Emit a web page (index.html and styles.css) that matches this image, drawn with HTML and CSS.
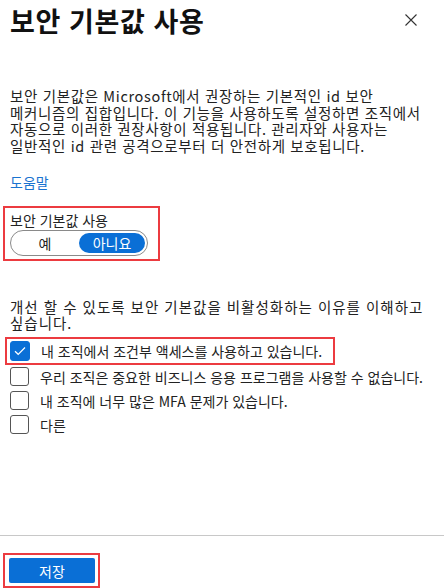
FILE: index.html
```html
<!DOCTYPE html>
<html lang="ko">
<head>
<meta charset="utf-8">
<link rel="stylesheet" href="styles.css">
</head>
<body>
<div class="panel">
  <main class="content">
    <header class="head">
      <h1 class="title">보안 기본값 사용</h1>
      <button class="close" aria-label="닫기">
        <svg width="14" height="14" viewBox="0 0 14 14"><path d="M1.5 1.5 L12.5 12.5 M12.5 1.5 L1.5 12.5" stroke="#333" stroke-width="1.1" fill="none"/></svg>
      </button>
    </header>
    <p class="desc">보안 기본값은 Microsoft에서 권장하는 기본적인 id 보안 메커니즘의 집합입니다. 이 기능을 사용하도록 설정하면 조직에서 자동으로 이러한 권장사항이 적용됩니다. 관리자와 사용자는 일반적인 id 관련 공격으로부터 더 안전하게 보호됩니다.</p>
    <a class="help" href="#">도움말</a>
    <div class="mark field">
      <div class="label">보안 기본값 사용</div>
      <div class="toggle">
        <span class="opt">예</span>
        <span class="opt on">아니요</span>
      </div>
    </div>
    <p class="reason">개선 할 수 있도록 보안 기본값을 비활성화하는 이유를 이해하고 싶습니다.</p>
    <ul class="checks">
      <li class="mark check-mark"><span class="box checked"><svg width="12" height="10" viewBox="0 0 12 10"><path d="M1 5.2 L4.2 8.3 L11 1.5" stroke="#fff" stroke-width="1.2" fill="none"/></svg></span><span>내 조직에서 조건부 액세스를 사용하고 있습니다.</span></li>
      <li><span class="box"></span><span>우리 조직은 중요한 비즈니스 응용 프로그램을 사용할 수 없습니다.</span></li>
      <li><span class="box"></span><span>내 조직에 너무 많은 MFA 문제가 있습니다.</span></li>
      <li><span class="box"></span><span>다른</span></li>
    </ul>
  </main>
  <footer class="foot">
    <div class="mark save-mark"><button class="save">저장</button></div>
  </footer>
</div>
</body>
</html>
```
FILE: styles.css
```css
* { box-sizing: border-box; }
html, body { margin: 0; padding: 0; background: #fff; }
body {
  font-family: "Noto Sans CJK KR", "Noto Sans", sans-serif;
  color: #222;
  font-size: 14px;
  word-break: keep-all;
}
.panel {
  height: 588px;
  display: flex;
  flex-direction: column;
}
.content {
  flex: 1;
  padding: 0 14px 0 10px;
}
.head {
  display: flex;
  align-items: center;
  justify-content: space-between;
  height: 40px;
}
.title {
  margin: 0;
  font-size: 27px;
  font-weight: 700;
  color: #111;
  letter-spacing: 0.6px;
}
.close {
  border: 0;
  background: none;
  padding: 0;
  margin-right: 12px;
  width: 14px;
  height: 14px;
  display: flex;
}
.desc {
  margin: 48px 0 0;
  font-size: 14.5px;
  line-height: 16.7px;
  letter-spacing: 0.65px;
}
.help {
  display: block;
  margin-top: 17px;
  color: #1a73d0;
  text-decoration: none;
}
.mark {
  border: 2px solid #ec3b40;
}
.field {
  margin: 14px 0 0 -7px;
  width: 157px;
  padding: 2px 10px 3px 5px;
}
.label { line-height: 20px; }
.toggle {
  display: flex;
  align-items: center;
  justify-content: space-between;
  height: 26px;
  border: 1px solid #8a8a8a;
  border-radius: 13px;
  padding: 0 2px 0 0;
}
.opt {
  width: 68px;
  text-align: center;
}
.opt.on {
  background: #0a6fd6;
  color: #fff;
  border-radius: 10px;
  height: 20px;
  line-height: 20px;
  width: 66px;
}
.reason {
  margin: 38px 0 0;
  font-size: 14.5px;
  line-height: 16px;
  letter-spacing: 1px;
}
.checks {
  list-style: none;
  margin: 6px 0 0;
  padding: 0;
}
.checks li {
  display: flex;
  align-items: center;
  gap: 11px;
  height: 24px;
}
.check-mark {
  margin-left: -5px;
  width: 330px;
  height: 28px !important;
  padding-left: 3px;
  margin-bottom: 0;
}
.box {
  width: 19px;
  height: 19px;
  border: 1px solid #555;
  border-radius: 3px;
  display: flex;
  align-items: center;
  justify-content: center;
  flex: none;
}
.box.checked {
  background: #0a6fd6;
  border-color: #0a6fd6;
  width: 20px;
  height: 20px;
}
.foot {
  border-top: 1px solid #c8c8c8;
  height: 53px;
  padding: 17px 0 0 3px;
}
.save-mark {
  width: 97px;
  height: 35px;
  padding: 3px 3px 0 4px;
}
.save {
  width: 86px;
  height: 25px;
  border: 0;
  border-radius: 2px;
  background: #0a6fd6;
  color: #fff;
  font-family: inherit;
  font-size: 14px;
  padding: 0;
}
```
